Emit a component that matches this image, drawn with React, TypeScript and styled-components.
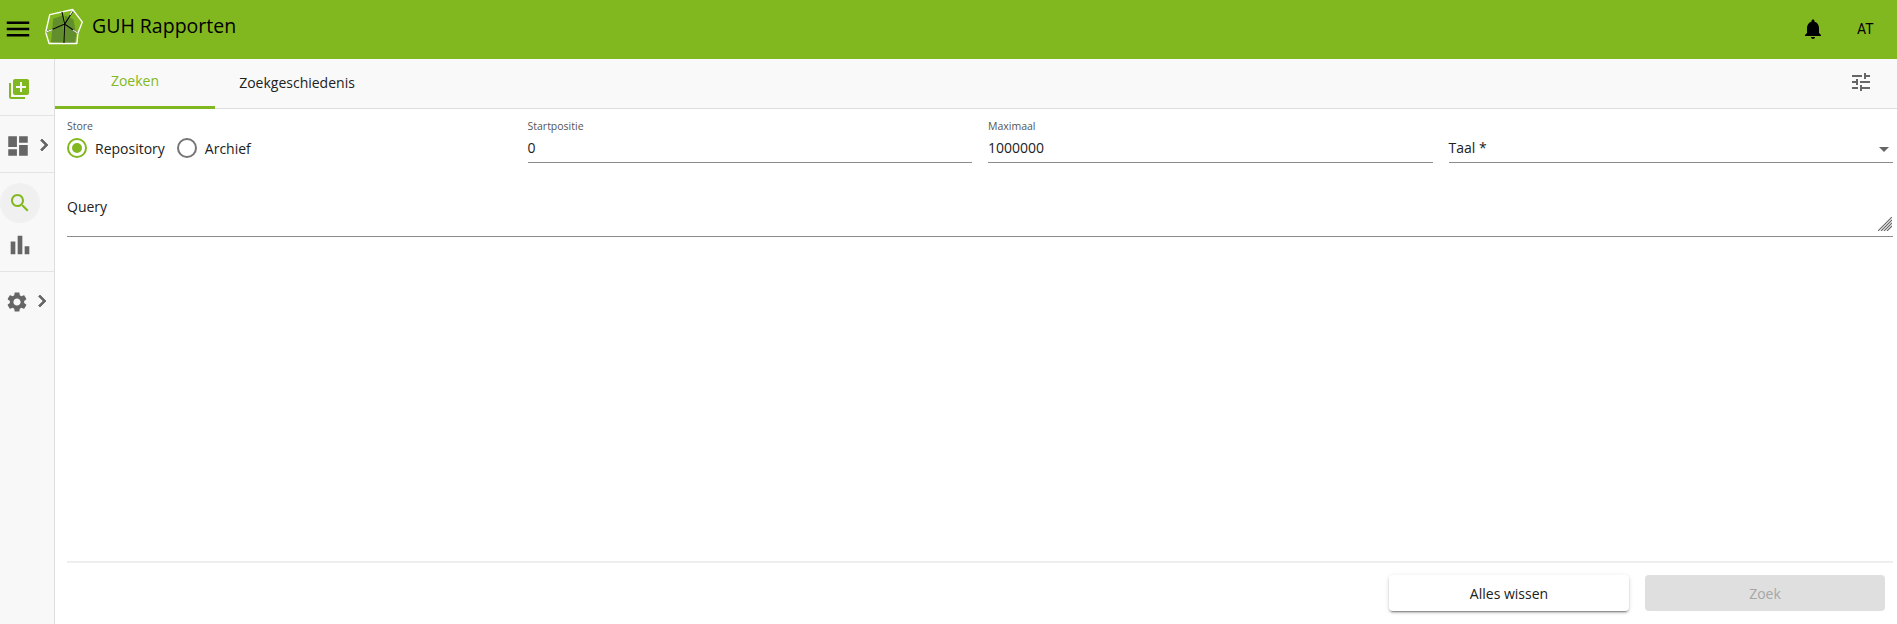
import React from "react";
import styled, { createGlobalStyle } from "styled-components";

const GREEN = "#82b81f";

const Global = createGlobalStyle`
  html, body { margin: 0; padding: 0; background: #fff; }
  body { font-family: "Open Sans", "Liberation Sans", sans-serif; color: #212121; }
  * { box-sizing: border-box; }
`;

const Page = styled.div`
  width: 1897px;
  height: 624px;
  display: flex;
  flex-direction: column;
  overflow: hidden;
`;

const Header = styled.header`
  height: 59px;
  flex: none;
  background: ${GREEN};
  display: flex;
  align-items: center;
  color: #000;
`;

const MenuButton = styled.div`
  width: 36px;
  margin-top: -2px;
  display: flex;
  justify-content: center;
`;

const Logo = styled.svg`
  width: 38px;
  height: 39px;
  margin-left: 9px;
  margin-top: -6px;
`;

const Title = styled.div`
  font-size: 19.5px;
  line-height: 28px;
  margin-left: 9px;
  margin-top: -7px;
`;

const HeaderRight = styled.div`
  margin-left: auto;
  margin-top: -2px;
  display: flex;
  align-items: center;
`;

const Avatar = styled.div`
  font-family: Roboto, sans-serif;
  font-size: 14px;
  width: 16px;
  margin-left: 32px;
  margin-right: 24px;
`;

const Body = styled.div`
  flex: 1;
  display: flex;
  min-height: 0;
`;

const Sidebar = styled.nav`
  width: 55px;
  flex: none;
  background: #f8f8f8;
  border-right: 1px solid #dedede;
  display: flex;
  flex-direction: column;
`;

const SideSection = styled.div<{ $h: number }>`
  height: ${(p) => p.$h}px;
  flex: none;
  border-bottom: 1px solid #e4e4e4;
  display: flex;
  flex-direction: column;
  align-items: flex-start;
`;

const SideRow = styled.div<{ $left: number; $top: number }>`
  display: flex;
  align-items: center;
  padding-left: ${(p) => p.$left}px;
  padding-top: ${(p) => p.$top}px;
`;

const Chevron = styled.span`
  display: flex;
  margin-left: 1px;
  margin-top: -2px;
`;

const ActiveCircle = styled.div`
  width: 40px;
  height: 40px;
  border-radius: 50%;
  background: #f0f0f0;
  margin-top: 10px;
  display: flex;
  align-items: center;
  justify-content: center;
`;

const Main = styled.main`
  flex: 1;
  min-width: 0;
  display: flex;
  flex-direction: column;
`;

const TabBar = styled.div`
  height: 50px;
  flex: none;
  background: #f9f9f9;
  border-bottom: 1px solid #dedede;
  display: flex;
  align-items: stretch;
`;

const Tab = styled.div<{ $active?: boolean }>`
  width: ${(p) => (p.$active ? 160 : 164)}px;
  height: 50px;
  display: flex;
  align-items: center;
  justify-content: center;
  padding-bottom: 4px;
  font-size: 14px;
  color: ${(p) => (p.$active ? GREEN : "#212121")};
  border-bottom: ${(p) => (p.$active ? `3px solid ${GREEN}` : "none")};
`;

const TabActions = styled.div`
  margin-left: auto;
  margin-right: 24px;
  display: flex;
  align-items: center;
  padding-bottom: 4px;
`;

const Form = styled.div`
  flex: 1;
  display: flex;
  flex-direction: column;
  padding: 9px 4px 0 12px;
`;

const Grid = styled.div`
  display: grid;
  grid-template-columns: repeat(4, 1fr);
  column-gap: 16px;
`;

const Field = styled.div<{ $line?: boolean }>`
  height: 45px;
  border-bottom: ${(p) => (p.$line ? "1px solid #8c8c8c" : "none")};
`;

const FieldLabel = styled.div`
  font-size: 10.5px;
  line-height: 16px;
  height: 16px;
  color: #555;
`;

const FieldValue = styled.div`
  font-size: 14px;
  line-height: 28px;
  height: 28px;
  color: #212121;
`;

const SelectValue = styled.div`
  margin-top: 16px;
  height: 28px;
  font-size: 14px;
  line-height: 28px;
  display: flex;
  align-items: center;
  justify-content: space-between;
  padding-right: 4px;
`;

const Arrow = styled.span`
  width: 0;
  height: 0;
  border-left: 5px solid transparent;
  border-right: 5px solid transparent;
  border-top: 5px solid #666;
  margin-top: 2px;
`;

const RadioGroup = styled.div`
  height: 28px;
  display: flex;
  align-items: center;
`;

const RadioItem = styled.div`
  display: flex;
  align-items: center;
  font-size: 14px;
  margin-right: 12px;
`;

const RadioCircle = styled.span<{ $on?: boolean }>`
  width: 20px;
  height: 20px;
  border-radius: 50%;
  border: 2px solid ${(p) => (p.$on ? GREEN : "#757575")};
  margin-right: 8px;
  display: flex;
  align-items: center;
  justify-content: center;
  &::after {
    content: "";
    display: ${(p) => (p.$on ? "block" : "none")};
    width: 10px;
    height: 10px;
    border-radius: 50%;
    background: ${GREEN};
  }
`;

const QueryField = styled.div`
  margin-top: 28px;
  height: 46px;
  border-bottom: 1px solid #8c8c8c;
  position: relative;
  font-size: 14px;
  line-height: 20px;
  padding-top: 6px;
`;

const Grip = styled.svg`
  position: absolute;
  right: 1px;
  bottom: 5px;
  width: 14px;
  height: 14px;
`;

const Footer = styled.div`
  margin-top: auto;
  border-top: 2px solid #eeeeee;
  height: 63px;
  display: flex;
  justify-content: flex-end;
  gap: 16px;
  padding: 12px 8px 0 0;
`;

const Button = styled.div<{ $disabled?: boolean }>`
  width: 240px;
  height: 36px;
  border-radius: 4px;
  font-size: 14px;
  display: flex;
  align-items: center;
  justify-content: center;
  background: ${(p) => (p.$disabled ? "#dfdfdf" : "#fff")};
  color: ${(p) => (p.$disabled ? "#a6a6a6" : "#212121")};
  box-shadow: ${(p) =>
    p.$disabled
      ? "none"
      : "0 3px 1px -2px rgba(0,0,0,.28), 0 2px 2px 0 rgba(0,0,0,.18), 0 1px 5px 0 rgba(0,0,0,.12)"};
`;

const Icon = ({
  d,
  size = 24,
  color = "#666",
  bold = 0,
}: {
  d: string;
  size?: number;
  color?: string;
  bold?: number;
}) => (
  <svg width={size} height={size} viewBox="0 0 24 24" fill={color} style={{ display: "block" }}>
    <path d={d} stroke={bold ? color : "none"} strokeWidth={bold} />
  </svg>
);

const P = {
  menu: "M3 18h18v-2H3v2zm0-5h18v-2H3v2zm0-7v2h18V6H3z",
  add: "M4 6H2v14c0 1.1.9 2 2 2h14v-2H4V6zm16-4H8c-1.1 0-2 .9-2 2v12c0 1.1.9 2 2 2h12c1.1 0 2-.9 2-2V4c0-1.1-.9-2-2-2zm-1 9h-4v4h-2v-4H9V9h4V5h2v4h4v2z",
  dash: "M3 13h8V3H3v10zm0 8h8v-6H3v6zm10 0h8V11h-8v10zm0-18v6h8V3h-8z",
  chev: "M10 6L8.59 7.41 13.17 12l-4.58 4.59L10 18l6-6z",
  search:
    "M15.5 14h-.79l-.28-.27C15.41 12.59 16 11.11 16 9.5 16 5.91 13.09 3 9.5 3S3 5.91 3 9.5 5.91 16 9.5 16c1.61 0 3.09-.59 4.23-1.57l.27.28v.79l5 4.99L20.49 19l-4.99-5zm-6 0C7.01 14 5 11.99 5 9.5S7.01 5 9.5 5 14 7.01 14 9.5 11.99 14 9.5 14z",
  chart: "M4 9h4v11H4zm12 4h4v7h-4zm-6-9h4v16h-4z",
  gear:
    "M19.14 12.94c.04-.3.06-.61.06-.94 0-.32-.02-.64-.07-.94l2.03-1.58c.18-.14.23-.41.12-.61l-1.92-3.32c-.12-.22-.37-.29-.59-.22l-2.39.96c-.5-.38-1.03-.7-1.62-.94l-.36-2.54c-.04-.24-.24-.41-.48-.41h-3.84c-.24 0-.43.17-.47.41l-.36 2.54c-.59.24-1.13.57-1.62.94l-2.39-.96c-.22-.08-.47 0-.59.22L2.74 8.87c-.12.21-.08.47.12.61l2.03 1.58c-.05.3-.09.63-.09.94s.02.64.07.94l-2.03 1.58c-.18.14-.23.41-.12.61l1.92 3.32c.12.22.37.29.59.22l2.39-.96c.5.38 1.03.7 1.62.94l.36 2.54c.05.24.24.41.48.41h3.84c.24 0 .44-.17.47-.41l.36-2.54c.59-.24 1.13-.56 1.62-.94l2.39.96c.22.08.47 0 .59-.22l1.92-3.32c.12-.22.07-.47-.12-.61l-2.01-1.58zM12 15.6c-1.98 0-3.6-1.62-3.6-3.6s1.62-3.6 3.6-3.6 3.6 1.62 3.6 3.6-1.62 3.6-3.6 3.6z",
  bell: "M12 22c1.1 0 2-.9 2-2h-4c0 1.1.89 2 2 2zm6-6v-5c0-3.07-1.64-5.64-4.5-6.32V4c0-.83-.67-1.5-1.5-1.5s-1.5.67-1.5 1.5v.68C7.63 5.36 6 7.92 6 11v5l-2 2v1h16v-1l-2-2z",
  tune: "M3 17v2h6v-2H3zM3 5v2h10V5H3zm10 16v-2h8v-2h-8v-2h-2v6h2zM7 9v2H3v2h4v2h2V9H7zm14 4v-2H11v2h10zm-6-4h2V7h4V5h-4V3h-2v6z",
};

export default function App() {
  return (
    <Page>
      <Global />
      <Header>
        <MenuButton>
          <Icon d={P.menu} size={30} color="#000" />
        </MenuButton>
        <Logo viewBox="48 22 112 106">
          <polygon points="72,52 102,42 104,124 66,122" fill="#5f8a30" opacity="0.9" />
          <polygon points="106,42 132,54 140,100 136,124 106,124" fill="#5f8a30" opacity="0.9" />
          <polygon
            points="62,40 130,25 158,62 145,95 142,125 60,125 50,92"
            fill="none"
            stroke="#fff"
            strokeWidth="4"
            strokeLinejoin="round"
          />
          <path d="M50 92 L106 68 L145 95 M106 68 L130 30 M106 68 L104 125 M106 68 L98 32" fill="none" stroke="#000" strokeWidth="3" />
          <path d="M50 92 L70 84 M100 125 L108 125 M130 27 L122 40 M145 95 L130 85" fill="none" stroke="#fff" strokeWidth="3" />
        </Logo>
        <Title>GUH Rapporten</Title>
        <HeaderRight>
          <Icon d={P.bell} size={24} color="#000" />
          <Avatar>AT</Avatar>
        </HeaderRight>
      </Header>
      <Body>
        <Sidebar>
          <SideSection $h={57}>
            <SideRow $left={7} $top={18}>
              <Icon d={P.add} color={GREEN} />
            </SideRow>
          </SideSection>
          <SideSection $h={57}>
            <SideRow $left={5} $top={17}>
              <Icon d={P.dash} size={26} />
              <Chevron>
                <Icon d={P.chev} bold={0.8} />
              </Chevron>
            </SideRow>
          </SideSection>
          <SideSection $h={99}>
            <ActiveCircle>
              <Icon d={P.search} color={GREEN} />
            </ActiveCircle>
            <SideRow $left={6} $top={8}>
              <Icon d={P.chart} size={28} />
            </SideRow>
          </SideSection>
          <SideRow $left={5} $top={17}>
            <Icon d={P.gear} size={26} />
            <Chevron>
              <Icon d={P.chev} bold={0.8} />
            </Chevron>
          </SideRow>
        </Sidebar>
        <Main>
          <TabBar>
            <Tab $active>Zoeken</Tab>
            <Tab>Zoekgeschiedenis</Tab>
            <TabActions>
              <Icon d={P.tune} />
            </TabActions>
          </TabBar>
          <Form>
            <Grid>
              <Field>
                <FieldLabel>Store</FieldLabel>
                <RadioGroup>
                  <RadioItem>
                    <RadioCircle $on />
                    Repository
                  </RadioItem>
                  <RadioItem>
                    <RadioCircle />
                    Archief
                  </RadioItem>
                </RadioGroup>
              </Field>
              <Field $line>
                <FieldLabel>Startpositie</FieldLabel>
                <FieldValue>0</FieldValue>
              </Field>
              <Field $line>
                <FieldLabel>Maximaal</FieldLabel>
                <FieldValue>1000000</FieldValue>
              </Field>
              <Field $line>
                <SelectValue>
                  Taal *
                  <Arrow />
                </SelectValue>
              </Field>
            </Grid>
            <QueryField>
              Query
              <Grip viewBox="0 0 14 14">
                <path d="M0 14 L14 0 M3 14 L14 3 M6 14 L14 6 M9 14 L14 9" stroke="#666" strokeWidth="1.1" fill="none" />
              </Grip>
            </QueryField>
            <Footer>
              <Button>Alles wissen</Button>
              <Button $disabled>Zoek</Button>
            </Footer>
          </Form>
        </Main>
      </Body>
    </Page>
  );
}
